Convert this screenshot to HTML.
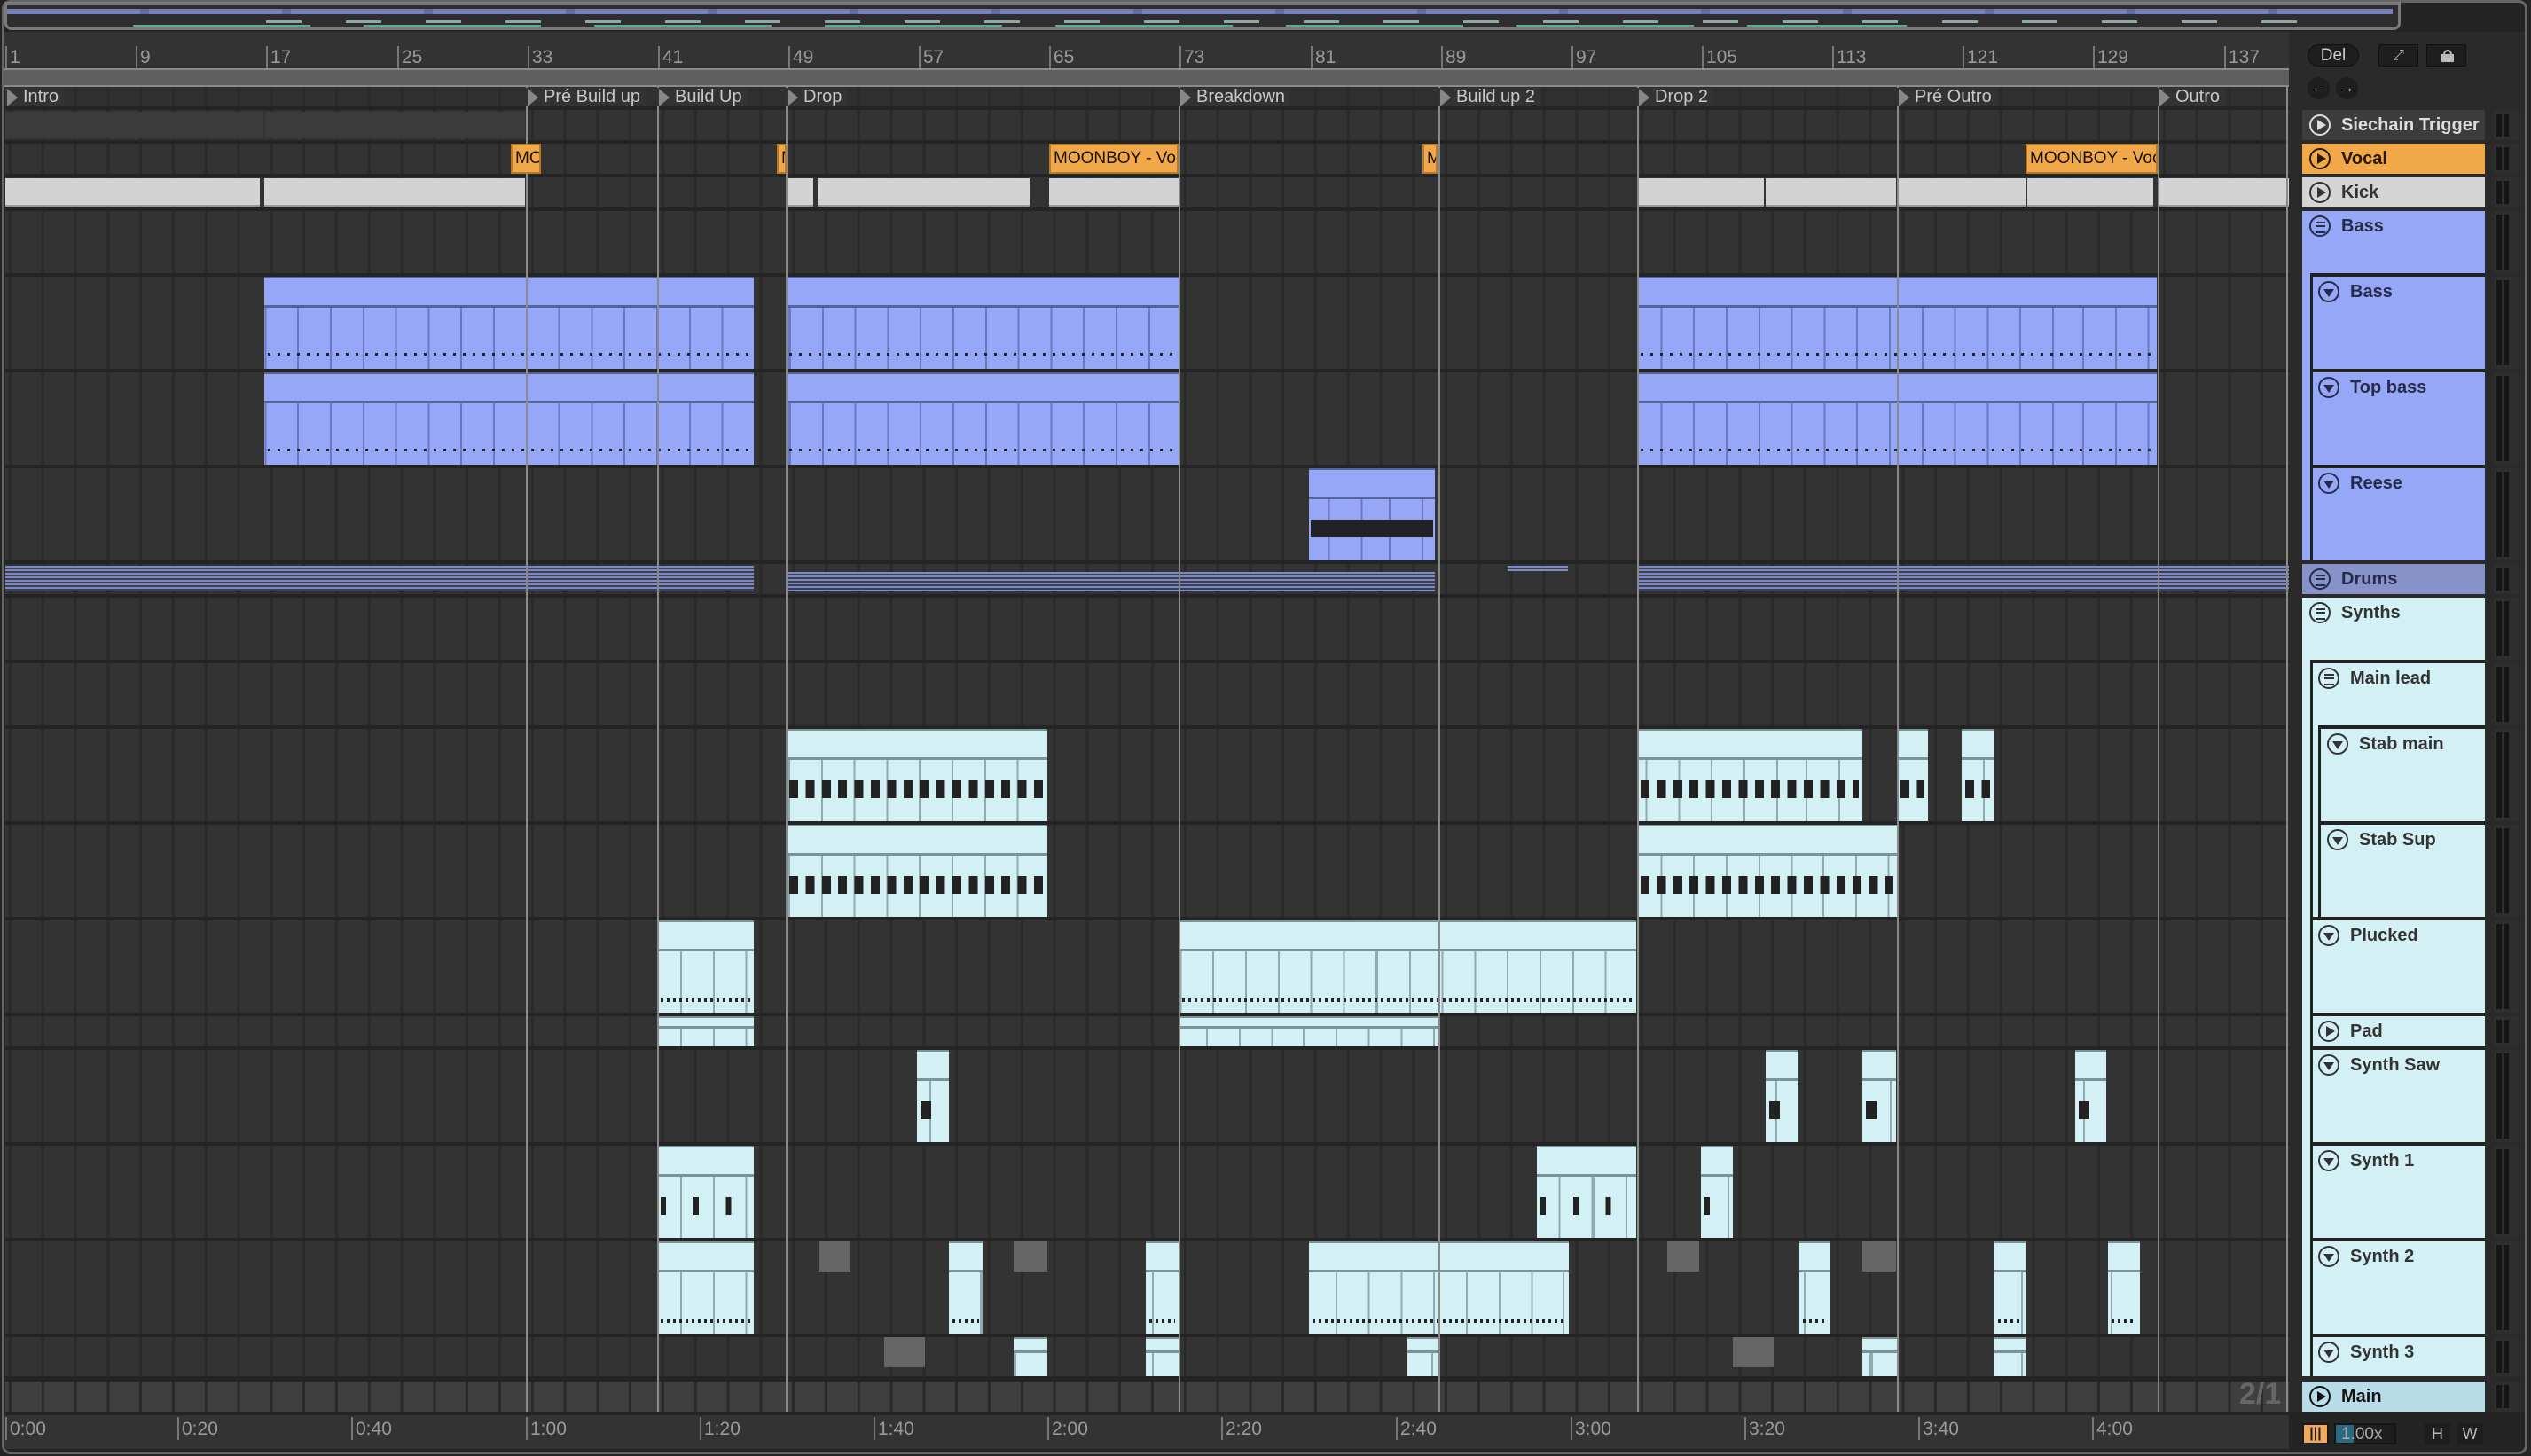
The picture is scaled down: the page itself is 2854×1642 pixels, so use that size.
<!DOCTYPE html>
<html><head><meta charset="utf-8">
<style>
*{margin:0;padding:0;box-sizing:border-box}
body{width:2854px;height:1642px;background:#242424;position:relative;overflow:hidden;font-family:"Liberation Sans",sans-serif}
.a{position:absolute}
.lane{position:absolute;left:6px;width:2575px;background-color:#333;background-image:repeating-linear-gradient(90deg,#2a2a2a 0 3px,transparent 3px 36.8px);background-position:4px 0}
.loc{position:absolute;top:98px;width:2px;height:1494px;background:#8a8a8a}
.rn{position:absolute;top:52px;font-size:21px;color:#9a9a9a;border-left:2px solid #777;padding-left:3px;height:26px;line-height:26px}
.ll{position:absolute;top:99px;height:21px;font-size:20px;color:#c8c8c8;line-height:21px;padding-left:20px;padding-right:6px;background:#333}
.ll:before{content:"";position:absolute;left:2px;top:1px;border-left:12px solid #888;border-top:10px solid transparent;border-bottom:10px solid transparent}
.tl{position:absolute;top:1598px;font-size:21px;color:#9a9a9a;border-left:2px solid #777;padding-left:3px;height:26px;line-height:28px}
.h{position:absolute;font-size:20px;font-weight:bold;color:#333;padding-left:44px;line-height:34px}
.ic{position:absolute;left:8px;top:5px;width:24px;height:24px;border:2px solid currentColor;border-radius:50%}
.pl:after{content:"";position:absolute;left:7px;top:4px;border-left:10px solid currentColor;border-top:6px solid transparent;border-bottom:6px solid transparent}
.dn:after{content:"";position:absolute;left:4px;top:7px;border-top:9px solid currentColor;border-left:6px solid transparent;border-right:6px solid transparent}
.gp:after{content:"";position:absolute;left:5px;top:5px;width:11px;height:9px;border-top:2px solid currentColor;border-bottom:2px solid currentColor}
.gp:before{content:"";position:absolute;left:5px;top:9px;width:11px;height:2px;background:currentColor}
.mt{position:absolute;left:2812px;width:30px;background:#2e2e2e}
.mt:before,.mt:after{content:"";position:absolute;top:4px;bottom:4px;width:6px;background:#151515}
.mt:before{left:3px}.mt:after{left:11px}
.voc{position:absolute;top:162px;height:34px;background:#f0a848;border:2px solid #b57a2c;color:#1a1000;font-size:19px;line-height:30px;overflow:hidden;white-space:nowrap;padding-left:3px}
</style></head><body>
<div class="a" style="left:2px;top:0;width:2848px;height:1640px;border:3px solid #666;border-radius:10px"></div>
<div class="a" style="left:5px;top:2px;width:2702px;height:32px;background:#2e2e2e;border:3px solid #7a7a7a;border-top-width:4px;border-radius:0 0 8px 8px"></div>
<div class="a" style="left:8px;top:10px;width:2690px;height:6px;background:repeating-linear-gradient(90deg,#7480b8 0 150px,#5f6aa0 150px 160px)"></div>
<div class="a" style="left:300px;top:23px;width:2300px;height:3px;background:repeating-linear-gradient(90deg,#8fa8aa 0 40px,transparent 40px 90px)"></div>
<div class="a" style="left:150px;top:28px;width:2000px;height:2px;background:repeating-linear-gradient(90deg,#4fb09a 0 200px,transparent 200px 260px)"></div>
<div class="a" style="left:5px;top:36px;width:2576px;height:42px;background:#333"></div>
<div class="rn" style="left:6px">1</div><div class="rn" style="left:153px">9</div><div class="rn" style="left:300px">17</div><div class="rn" style="left:448px">25</div><div class="rn" style="left:595px">33</div><div class="rn" style="left:742px">41</div><div class="rn" style="left:889px">49</div><div class="rn" style="left:1036px">57</div><div class="rn" style="left:1183px">65</div><div class="rn" style="left:1330px">73</div><div class="rn" style="left:1478px">81</div><div class="rn" style="left:1625px">89</div><div class="rn" style="left:1772px">97</div><div class="rn" style="left:1919px">105</div><div class="rn" style="left:2066px">113</div><div class="rn" style="left:2213px">121</div><div class="rn" style="left:2360px">129</div><div class="rn" style="left:2508px">137</div>
<div class="a" style="left:5px;top:77px;width:2576px;height:21px;background:#5e5e5e;border-top:2px solid #8a8a8a;border-bottom:2px solid #8a8a8a"></div>
<div class="a" style="left:2581px;top:36px;width:266px;height:1556px;background:#2a2a2a"></div>
<div class="a" style="left:2602px;top:50px;width:58px;height:25px;border-radius:13px;background:#1e1e1e;border:1px solid #111;color:#ccc;font-size:19px;text-align:center;line-height:23px">Del</div>
<div class="a" style="left:2682px;top:50px;width:45px;height:25px;background:#1e1e1e;border:1px solid #111;color:#bbb;font-size:16px;text-align:center;line-height:24px">⤢</div>
<div class="a" style="left:2736px;top:50px;width:45px;height:25px;background:#1e1e1e;border:1px solid #111"><div class="a" style="left:16px;top:10px;width:14px;height:9px;background:#bbb"></div><div class="a" style="left:18px;top:5px;width:10px;height:8px;border:2px solid #bbb;border-bottom:0;border-radius:5px 5px 0 0"></div></div>
<div class="a" style="left:2602px;top:87px;width:25px;height:25px;border-radius:50%;background:#1e1e1e;color:#777;font-size:16px;text-align:center;line-height:25px">←</div>
<div class="a" style="left:2634px;top:87px;width:25px;height:25px;border-radius:50%;background:#1e1e1e;color:#ccc;font-size:16px;text-align:center;line-height:25px">→</div>
<div class="lane" style="top:98px;height:22px;background-color:#2f2f2f"></div>
<div id="lanes"></div>
<div id="clips"></div>
<div class="loc" style="left:593px"></div><div class="loc" style="left:741px"></div><div class="loc" style="left:886px"></div><div class="loc" style="left:1329px"></div><div class="loc" style="left:1622px"></div><div class="loc" style="left:1846px"></div><div class="loc" style="left:2139px"></div><div class="loc" style="left:2433px"></div><div class="loc" style="left:2578px;top:98px"></div>
<div class="ll" style="left:6px">Intro</div><div class="ll" style="left:593px">Pré Build up</div><div class="ll" style="left:741px">Build Up</div><div class="ll" style="left:886px">Drop</div><div class="ll" style="left:1329px">Breakdown</div><div class="ll" style="left:1622px">Build up 2</div><div class="ll" style="left:1846px">Drop 2</div><div class="ll" style="left:2139px">Pré Outro</div><div class="ll" style="left:2433px">Outro</div>
<div class="voc" style="left:576px;width:34px">MOONBOY</div>
<div class="voc" style="left:876px;width:11px">M</div>
<div class="voc" style="left:1183px;width:146px">MOONBOY - Vocal</div>
<div class="voc" style="left:1604px;width:17px">M</div>
<div class="voc" style="left:2284px;width:149px">MOONBOY - Vocal</div>
<div class="a" style="left:2525px;top:1553px;font-size:34px;font-weight:bold;color:#666">2/1</div>
<div class="a" style="left:5px;top:1596px;width:2576px;height:38px;background:#333"></div>
<div class="tl" style="left:6px">0:00</div><div class="tl" style="left:200px">0:20</div><div class="tl" style="left:396px">0:40</div><div class="tl" style="left:593px">1:00</div><div class="tl" style="left:789px">1:20</div><div class="tl" style="left:985px">1:40</div><div class="tl" style="left:1181px">2:00</div><div class="tl" style="left:1377px">2:20</div><div class="tl" style="left:1574px">2:40</div><div class="tl" style="left:1771px">3:00</div><div class="tl" style="left:1967px">3:20</div><div class="tl" style="left:2163px">3:40</div><div class="tl" style="left:2359px">4:00</div>
<div class="h" style="left:2596px;top:124px;width:206px;height:34px;background:#3c3c3c;color:#ddd"><span class="ic pl"></span>Siechain Trigger</div>
<div class="h" style="left:2596px;top:162px;width:206px;height:34px;background:#f0a848;color:#2a1800"><span class="ic pl"></span>Vocal</div>
<div class="h" style="left:2596px;top:200px;width:206px;height:34px;background:#d4d4d4;color:#333"><span class="ic pl"></span>Kick</div>
<div class="a" style="left:2596px;top:238px;width:206px;height:394px;background:#97a7f7"></div>
<div class="a" style="left:2605px;top:308px;width:3px;height:324px;background:#222"></div>
<div class="a" style="left:2605px;top:308px;width:197px;height:4px;background:#222"></div>
<div class="a" style="left:2605px;top:416px;width:197px;height:4px;background:#222"></div>
<div class="a" style="left:2605px;top:524px;width:197px;height:4px;background:#222"></div>
<div class="h" style="left:2596px;top:238px;color:#252b48"><span class="ic gp"></span>Bass</div>
<div class="h" style="left:2606px;top:312px;color:#252b48"><span class="ic dn"></span>Bass</div>
<div class="h" style="left:2606px;top:420px;color:#252b48"><span class="ic dn"></span>Top bass</div>
<div class="h" style="left:2606px;top:528px;color:#252b48"><span class="ic dn"></span>Reese</div>
<div class="h" style="left:2596px;top:636px;width:206px;height:34px;background:#8792c8;color:#252b48"><span class="ic gp"></span>Drums</div>
<div class="a" style="left:2596px;top:674px;width:206px;height:878px;background:#d3f0f5"></div>
<div class="a" style="left:2605px;top:744px;width:3px;height:808px;background:#222"></div>
<div class="a" style="left:2614px;top:818px;width:3px;height:216px;background:#222"></div>
<div class="a" style="left:2605px;top:744px;width:197px;height:4px;background:#222"></div>
<div class="a" style="left:2614px;top:818px;width:188px;height:4px;background:#222"></div>
<div class="a" style="left:2614px;top:926px;width:188px;height:4px;background:#222"></div>
<div class="a" style="left:2605px;top:1034px;width:197px;height:4px;background:#222"></div>
<div class="a" style="left:2605px;top:1142px;width:197px;height:4px;background:#222"></div>
<div class="a" style="left:2605px;top:1180px;width:197px;height:4px;background:#222"></div>
<div class="a" style="left:2605px;top:1288px;width:197px;height:4px;background:#222"></div>
<div class="a" style="left:2605px;top:1396px;width:197px;height:4px;background:#222"></div>
<div class="a" style="left:2605px;top:1504px;width:197px;height:4px;background:#222"></div>
<div class="h" style="left:2596px;top:674px;color:#333"><span class="ic gp"></span>Synths</div>
<div class="h" style="left:2606px;top:748px;color:#333"><span class="ic gp"></span>Main lead</div>
<div class="h" style="left:2616px;top:822px;color:#333"><span class="ic dn"></span>Stab main</div>
<div class="h" style="left:2616px;top:930px;color:#333"><span class="ic dn"></span>Stab Sup</div>
<div class="h" style="left:2606px;top:1038px;color:#333"><span class="ic dn"></span>Plucked</div>
<div class="h" style="left:2606px;top:1146px;color:#333"><span class="ic pl"></span>Pad</div>
<div class="h" style="left:2606px;top:1184px;color:#333"><span class="ic dn"></span>Synth Saw</div>
<div class="h" style="left:2606px;top:1292px;color:#333"><span class="ic dn"></span>Synth 1</div>
<div class="h" style="left:2606px;top:1400px;color:#333"><span class="ic dn"></span>Synth 2</div>
<div class="h" style="left:2606px;top:1508px;color:#333"><span class="ic dn"></span>Synth 3</div>
<div class="h" style="left:2596px;top:1558px;width:206px;height:34px;background:#b8dce8;color:#111"><span class="ic pl"></span>Main</div>
<div id="meters"></div>
<div class="a" style="left:2596px;top:1605px;width:30px;height:24px;background:#f3a95a;border:2px solid #1a1a1a;color:#222;font-size:16px;text-align:center;line-height:20px;font-weight:bold">|||</div>
<div class="a" style="left:2632px;top:1605px;width:70px;height:24px;background:#1e1e1e;border:2px solid #151515"><div class="a" style="left:0;top:0;width:20px;height:20px;background:#2a6a80"></div><div class="a" style="left:6px;top:0;font-size:19px;color:#aaa;line-height:21px">1.00x</div></div>
<div class="a" style="left:2734px;top:1605px;width:29px;height:24px;background:#1e1e1e;color:#bbb;font-size:18px;text-align:center;line-height:24px">H</div>
<div class="a" style="left:2770px;top:1605px;width:30px;height:24px;background:#1e1e1e;color:#bbb;font-size:18px;text-align:center;line-height:24px">W</div>
<script>
var rows=[[124,158],[162,196],[200,234],[238,308],[312,416],[420,524],[528,632],[636,670],[674,744],[748,818],[822,926],[930,1034],[1038,1142],[1146,1180],[1184,1288],[1292,1396],[1400,1504],[1508,1552],[1558,1592]];
var L=document.getElementById('lanes'),M=document.getElementById('meters'),C=document.getElementById('clips');
rows.forEach(function(r,i){var d=document.createElement('div');d.className='lane';d.style.top=r[0]+'px';d.style.height=(r[1]-r[0])+'px';if(i==18)d.style.backgroundColor='#3f3f3f';L.appendChild(d);
var m=document.createElement('div');m.className='mt';m.style.top=r[0]+'px';m.style.height=(r[1]-r[0])+'px';M.appendChild(m);});
function box(x1,x2,y1,y2,css){var d=document.createElement('div');d.className='a';d.style.cssText='left:'+x1+'px;width:'+(x2-x1)+'px;top:'+y1+'px;height:'+(y2-y1)+'px;'+css;C.appendChild(d);return d;}
function mclip(x1,x2,y1,y2,bg,line,sub,note){var h=Math.min(32,Math.round((y2-y1)/3));box(x1,x2,y1,y2,'background:'+bg+';border-top:2px solid '+line);
box(x1,x2,y1+h,y1+h+3,'background:'+line);
box(x1,x2,y1+h+3,y2,'background-image:repeating-linear-gradient(90deg,'+sub+' 0 2px,transparent 2px 36.8px);background-position:'+(4-x1)+'px 0');
if(note)box(x1+4,x2-4,y1+note[0],y1+note[1],'background-image:repeating-linear-gradient(90deg,#222 0 '+note[2]+'px,transparent '+note[2]+'px '+note[3]+'px)');}
box(6,296,126,156,'background:#3b3b3b');box(299,592,126,156,'background:#3b3b3b');
[[6,293],[298,592],[886,917],[922,1161],[1183,1329],[1846,1989],[1991,2138],[2140,2284],[2286,2428],[2435,2581]].forEach(function(c){box(c[0],c[1],201,233,'background:#d3d3d3;border-bottom:2px solid #999')});
[[298,850],[886,1329],[1846,2432]].forEach(function(c){[312,420].forEach(function(y){mclip(c[0],c[1],y,y+104,'#97a7f7','#56629c','#6a78c0',[86,89,3,11]);});});
mclip(1476,1618,528,632,'#97a7f7','#56629c','#6a78c0');box(1478,1616,586,606,'background:#202126');
var ds='background:repeating-linear-gradient(180deg,#7c89c8 0 2px,#3d3f4c 2px 4px)';
box(6,850,638,667,ds);box(886,1618,645,667,ds);box(1700,1768,638,644,ds);box(1846,2581,638,667,ds);
var CY='#d3f0f5',CL='#7a9499',CS='#8faab0';
function cy(x1,x2,r,n){mclip(x1,x2,rows[r][0],rows[r][1],CY,CL,CS,n);}
var nt=[58,78,10,18.4];
cy(886,1181,10,nt);cy(1846,2100,10,nt);cy(2139,2174,10,nt);cy(2212,2248,10,nt);
cy(886,1181,11,nt);cy(1846,2139,11,nt);
cy(741,850,12,[88,92,3,7]);cy(1329,1845,12,[88,92,3,7]);
cy(741,850,13);cy(1329,1622,13);
[[1034,1070],[1991,2028],[2100,2138],[2340,2375]].forEach(function(c){cy(c[0],c[1],14,[58,78,12,40]);});
[[741,850],[1733,1845],[1918,1954]].forEach(function(c){cy(c[0],c[1],15,[58,78,6,36.8]);});
[[741,850],[1070,1108],[1292,1329],[1476,1769],[2029,2064],[2249,2284],[2377,2413]].forEach(function(c){cy(c[0],c[1],16,[88,92,3,7]);});
[[923,959],[1143,1181],[1880,1916],[2100,2138]].forEach(function(c){box(c[0],c[1],1400,1434,'background:#666');});
[[997,1043],[1954,2000]].forEach(function(c){box(c[0],c[1],1508,1542,'background:#666');});
[[1143,1181],[1292,1329],[1587,1622],[2100,2139],[2249,2284]].forEach(function(c){cy(c[0],c[1],17);});
</script>
</body></html>
